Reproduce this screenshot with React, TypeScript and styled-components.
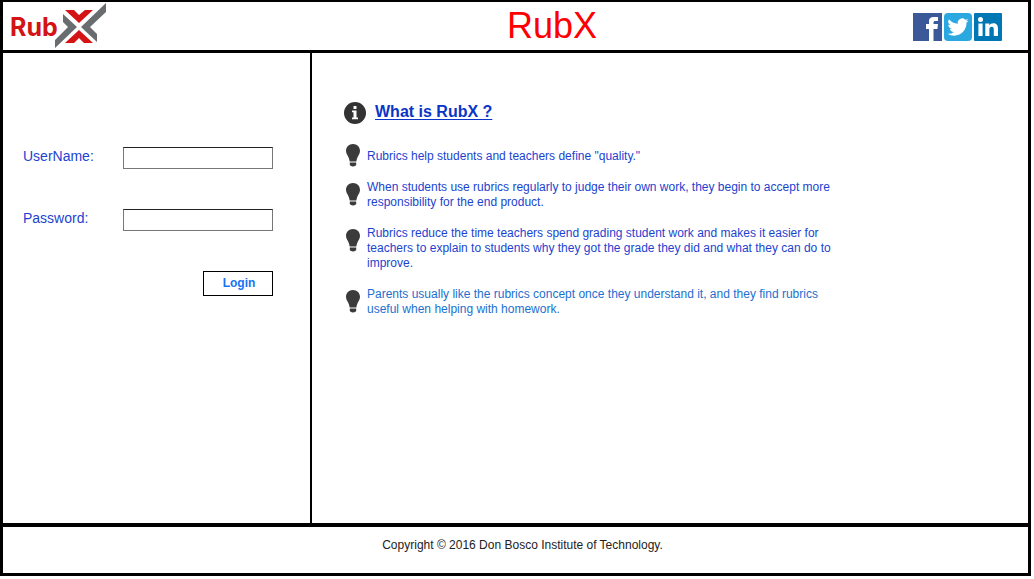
import React from "react";
import styled, { createGlobalStyle } from "styled-components";

const GlobalStyle = createGlobalStyle`
  *, *::before, *::after { box-sizing: border-box; }
  body {
    margin: 0;
    background: #fff;
    font-family: "Liberation Sans", Arial, sans-serif;
    color: #1c43cf;
  }
`;

const Page = styled.div`
  display: flex;
  flex-direction: column;
  min-height: calc(100vh - 3px);
  margin-right: 3px;
  border: 3px solid #000;
  border-top-width: 2px;
`;

const Header = styled.header`
  display: grid;
  grid-template-columns: 1fr auto 1fr;
  align-items: center;
  height: 51px;
  padding: 0 26px 0 7px;
  border-bottom: 3px solid #000;
`;

const Logo = styled.a`
  display: flex;
  align-items: center;
  color: #d31314;
  font: 700 25px/30px Inter, sans-serif;
  text-decoration: none;
`;

const LogoName = styled.span`
  padding-top: 2px;
`;

const LogoMark = styled.svg`
  flex: none;
  margin-left: -4px;
`;

const Title = styled.h1`
  margin: 0;
  padding-left: 92px;
  color: #f00;
  font-size: 36px;
  font-weight: 400;
  line-height: 44px;
`;

const Social = styled.nav`
  display: flex;
  justify-content: flex-end;
  gap: 2px;
  padding-top: 2px;
`;

const SocialLink = styled.a`
  display: block;
  height: 29px;
`;

const Body = styled.div`
  display: flex;
  flex: 1;
`;

const LoginPanel = styled.form`
  display: flex;
  flex-direction: column;
  flex: 0 0 309px;
  padding: 94px 37px 0 20px;
  border-right: 2px solid #000;
`;

const Field = styled.div`
  display: flex;
  align-items: center;
  justify-content: space-between;
  margin-bottom: 40px;
`;

const Label = styled.label`
  padding-bottom: 4px;
  font-size: 14px;
  line-height: 18px;
`;

const TextBox = styled.input`
  width: 150px;
  height: 22px;
  padding: 0 4px;
  border: 1px solid #777;
  border-top-color: #222;
  border-radius: 0;
  background: #fff;
  font: inherit;
  font-size: 13px;
`;

const LoginButton = styled.button`
  align-self: flex-end;
  width: 70px;
  height: 25px;
  padding: 0 0 2px 2px;
  border: 1px solid #000;
  border-radius: 0;
  background: #fff;
  color: #1673f5;
  font: bold 12px/16px "Liberation Sans", Arial, sans-serif;
`;

const About = styled.main`
  flex: 1;
  padding: 49px 32px 0;
`;

const Heading = styled.h2`
  display: flex;
  align-items: center;
  gap: 9px;
  margin: 0 0 25px;
  color: #0a35c8;
  font-size: 16px;
  line-height: 24px;
`;

const HeadingLink = styled.a`
  color: inherit;
  text-underline-offset: 2px;
  line-height: 20px;
  padding-bottom: 2px;
`;

const Points = styled.ul`
  display: flex;
  flex-direction: column;
  gap: 16px;
  max-width: 500px;
  margin: 0;
  padding: 0 0 0 2px;
  list-style: none;
`;

const Point = styled.li<{ $light?: boolean }>`
  display: flex;
  align-items: flex-start;
  gap: 7px;
  color: ${(p) => (p.$light ? "#1c6fcf" : "#1c43cf")};
  font-size: 12px;
  line-height: 15px;
`;

const BulbIcon = styled.svg<{ $single?: boolean }>`
  flex: none;
  margin: ${(p) => (p.$single ? "-5px 0 -3px" : "3px 0 0")};
`;

const Footer = styled.footer`
  padding: 10px 16px 20px 30px;
  border-top: 4px solid #000;
  color: #222;
  font-size: 12px;
  line-height: 16px;
  text-align: center;
`;

const Bulb = ({ single }: { single?: boolean }) => (
  <BulbIcon $single={single} width="14" height="23" viewBox="0 0 14 23" fill="#3b3b3b" aria-hidden="true">
    <path d="M7 0C2.800 0 0 3 0 6.800c0 2.200 1 3.800 2 5.500.9 1.500 1.400 3.200 1.700 5.200h6.600c.3-2 .8-3.700 1.700-5.200 1-1.700 2-3.300 2-5.500C14 3 11.200 0 7 0z" />
    <path d="M3.800 18.600h6.400v1.700q0 2-3.200 2.200-3.200-.2-3.200-2.200z" />
  </BulbIcon>
);

const points = [
  { text: 'Rubrics help students and teachers define "quality."', single: true },
  { text: "When students use rubrics regularly to judge their own work, they begin to accept more responsibility for the end product." },
  { text: "Rubrics reduce the time teachers spend grading student work and makes it easier for teachers to explain to students why they got the grade they did and what they can do to improve." },
  { text: "Parents usually like the rubrics concept once they understand it, and they find rubrics useful when helping with homework.", light: true },
];

export default function App() {
  return (
    <>
      <GlobalStyle />
      <Page>
        <Header>
          <Logo href="#">
            <LogoName>Rub</LogoName>
            <LogoMark width="52" height="48" viewBox="0 0 52 48" role="img" aria-label="X">
              <path fill="#d31314" d="M11 8h9l5 5 6-5h8L25 21zM25 28l14 13h-9l-5-5-5 5h-9z" />
              <path fill="#696d70" d="M52 1v9L36 25l7 7v8L27 25zM9 12l14 13L1 46v-8l13-13-5-5z" />
            </LogoMark>
          </Logo>
          <Title>RubX</Title>
          <Social>
            <SocialLink href="#" aria-label="Facebook">
              <svg width="29" height="29" viewBox="0 0 29 29">
                <path fill="#3b5998" d="M0 0h29v28H0z" />
                <path fill="#fff" d="M16 28V16h-3v-5h3V8.500C16 5 18 4 21 4h4v4h-2.500C21 8 20.500 8.500 20.500 10v1H25l-.6 5h-3.900v12z" />
              </svg>
            </SocialLink>
            <SocialLink href="#" aria-label="Twitter">
              <svg width="28" height="29" viewBox="0 0 28 29">
                <rect width="28" height="28" rx="4" fill="#2ba8e0" />
                <path fill="#fff" transform="translate(3.500 3.500) scale(.88)" d="M23.950 4.570a10 10 0 0 1-2.820.77 4.960 4.960 0 0 0 2.160-2.720c-.95.550-2 .95-3.130 1.180a4.920 4.920 0 0 0-8.380 4.480C7.690 8.100 4.070 6.130 1.640 3.160a4.920 4.920 0 0 0 1.520 6.570 4.900 4.900 0 0 1-2.230-.61v.06a4.920 4.920 0 0 0 3.950 4.830 5 5 0 0 1-2.210.08 4.940 4.940 0 0 0 4.600 3.420A9.870 9.870 0 0 1 0 19.540a14 14 0 0 0 7.550 2.210c9.050 0 14-7.500 14-13.980l-.02-.64a10 10 0 0 0 2.420-2.560z" />
              </svg>
            </SocialLink>
            <SocialLink href="#" aria-label="LinkedIn">
              <svg width="28" height="29" viewBox="0 0 28 29">
                <rect width="28" height="28" rx="1" fill="#0077b5" />
                <g fill="#fff">
                  <circle cx="6.500" cy="6.500" r="2.500" />
                  <path d="M4.400 10.500h4.200V23H4.400zM11.300 10.500h4v1.800c.8-1.300 2.200-2.100 4-2.100 3.800 0 4.700 2.500 4.700 5.900V23h-4.200v-6.200c0-1.600-.2-3-2.100-3s-2.300 1.400-2.300 3V23h-4.100z" />
                </g>
              </svg>
            </SocialLink>
          </Social>
        </Header>
        <Body>
          <LoginPanel>
            <Field>
              <Label htmlFor="username">UserName:</Label>
              <TextBox id="username" type="text" />
            </Field>
            <Field>
              <Label htmlFor="password">Password:</Label>
              <TextBox id="password" type="password" />
            </Field>
            <LoginButton type="button">Login</LoginButton>
          </LoginPanel>
          <About>
            <Heading>
              <svg width="22" height="22" viewBox="0 0 22 22" aria-hidden="true">
                <circle cx="11" cy="11" r="11" fill="#333" />
                <path fill="#fff" d="M9.500 4h3v3h-3zM8 8.500h4.500v7H14v1.700H8v-1.700h1.500v-5.300H8z" />
              </svg>
              <HeadingLink href="#">What is RubX ?</HeadingLink>
            </Heading>
            <Points>
              {points.map((p) => (
                <Point key={p.text} $light={p.light}>
                  <Bulb single={p.single} />
                  <span>{p.text}</span>
                </Point>
              ))}
            </Points>
          </About>
        </Body>
        <Footer>Copyright © 2016 Don Bosco Institute of Technology.</Footer>
      </Page>
    </>
  );
}
